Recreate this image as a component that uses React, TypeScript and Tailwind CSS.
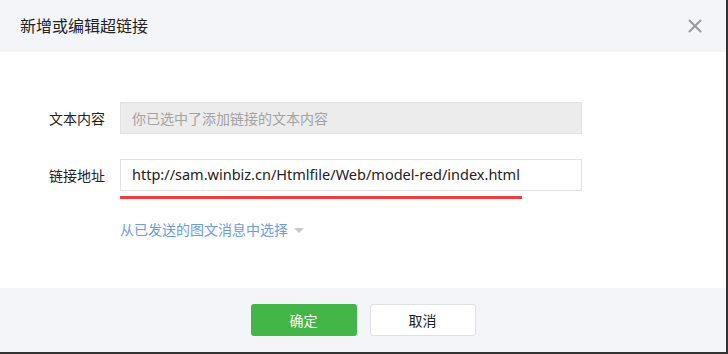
import { X } from "lucide-react";

const font = { fontFamily: '"Noto Sans", "Noto Sans CJK SC", sans-serif' };

export default function App() {
  return (
    <div className="w-[728px] h-[354px] bg-[#333]" style={font}>
      <div className="w-[726px] h-[352px] bg-white flex flex-col">
        {/* header */}
        <div className="h-[52px] bg-[#f4f5f9] flex items-center justify-between pl-5 pr-[20px]">
          <span className="text-[16px] text-[#222]">新增或编辑超链接</span>
          <X size={22} strokeWidth={2.2} className="text-[#9a9a9a]" />
        </div>

        {/* body */}
        <div className="h-[236px] pt-[50px]">
          <div className="flex items-center">
            <label className="w-[120px] pr-[15px] text-right text-[14px] text-[#222]">文本内容</label>
            <div className="w-[462px] h-[32px] bg-[#ececec] border border-[#e2e2e2] flex items-center px-[11px] text-[14px] text-[#a3a3a3]">
              你已选中了添加链接的文本内容
            </div>
          </div>

          <div className="flex items-center mt-[25px]">
            <label className="w-[120px] pr-[15px] text-right text-[14px] text-[#222]">链接地址</label>
            <div className="w-[462px] h-[32px] bg-white border border-[#e2e2e2] flex items-center px-[11px] text-[14.5px] text-[#222]">
              http://sam.winbiz.cn/Htmlfile/Web/model-red/index.html
            </div>
          </div>
          <div className="ml-[120px] mt-[5px] w-[402px] h-[3px] bg-[#f33b3b]" />

          <div className="ml-[120px] mt-[20px] flex items-center gap-[6px]">
            <span className="text-[14px] text-[#6a9be3]">从已发送的图文消息中选择</span>
            <span className="w-0 h-0 border-l-[5px] border-r-[5px] border-t-[5px] border-l-transparent border-r-transparent border-t-[#c8c8c8] mt-[2px]" />
          </div>
        </div>

        {/* footer */}
        <div className="flex-1 bg-[#f4f5f9] flex items-center justify-center gap-[13px]">
          <button className="w-[106px] h-[32px] rounded-[3px] bg-[#44b549] text-white text-[14px]">确定</button>
          <button className="w-[106px] h-[32px] rounded-[3px] bg-white border border-[#e0e1e6] text-[#222] text-[14px]">取消</button>
        </div>
      </div>
    </div>
  );
}
